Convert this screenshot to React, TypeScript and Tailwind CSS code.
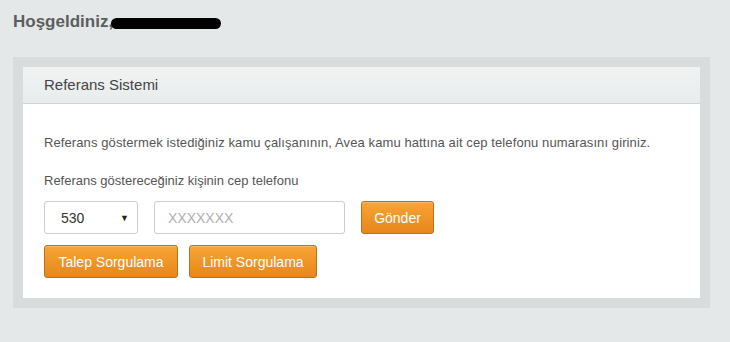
export default function App() {
  const btn =
    'h-[33px] rounded-[3px] border border-[#b8701a] bg-gradient-to-b from-[#f8a534] to-[#e7861b] text-[14px] text-white shadow-[inset_0_1px_0_rgba(255,255,255,0.25)]';

  return (
    <div className="h-[342px] w-full bg-[#e5e8e8] pt-[12px] font-['Liberation_Sans',Arial,sans-serif]">
      <div className="flex h-[20px] items-center pl-[13px]">
        <span className="text-[17px] font-bold leading-[20px] text-[#5b5e5f]">Hoşgeldiniz,</span>
        <span className="ml-[-2px] mt-[2px] h-[11px] w-[110px] rounded-full bg-black" />
      </div>

      <div className="ml-[13px] mt-[25px] w-[697px] bg-[#d8dcdc] p-[10px]">
        <div className="bg-white">
          <div className="flex h-[37px] items-center border-b border-[#cfd3d3] bg-gradient-to-b from-[#f1f3f3] to-[#e9ecec] pl-[21px] text-[15px] text-[#444]">
            Referans Sistemi
          </div>

          <div className="px-[21px] pb-[20px] pt-[29px] text-[13px] leading-[20px] text-[#555]">
            <p className="tracking-[0.1px]">
              Referans göstermek istediğiniz kamu çalışanının, Avea kamu hattına ait cep telefonu numarasını giriniz.
            </p>
            <p className="mt-[18px]">Referans göstereceğiniz kişinin cep telefonu</p>

            <div className="mt-[10px] flex items-center">
              <div className="flex h-[33px] w-[94px] items-center justify-between rounded-[3px] border border-[#cccccc] bg-white pl-[16px] pr-[8px] text-[14px] text-[#333]">
                <span>530</span>
                <span className="text-[9px] text-[#222]">▼</span>
              </div>
              <div className="ml-[16px] flex h-[33px] w-[191px] items-center rounded-[3px] border border-[#cccccc] bg-white pl-[13px] text-[14px] text-[#b0b0b0]">
                XXXXXXX
              </div>
              <button className={`${btn} ml-[16px] w-[73px]`}>Gönder</button>
            </div>

            <div className="mt-[11px] flex items-center gap-[11px]">
              <button className={`${btn} w-[134px]`}>Talep Sorgulama</button>
              <button className={`${btn} w-[128px]`}>Limit Sorgulama</button>
            </div>
          </div>
        </div>
      </div>
    </div>
  );
}
